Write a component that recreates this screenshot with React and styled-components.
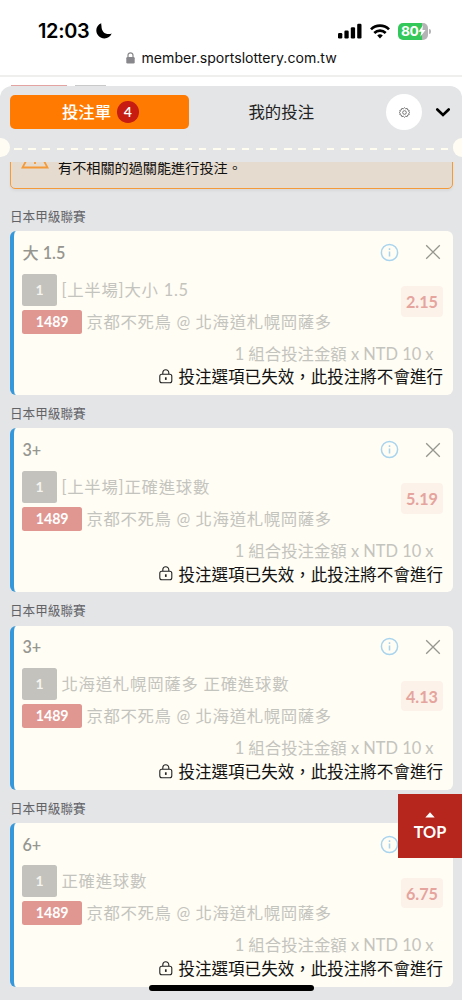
import React from "react";
import styled, { createGlobalStyle } from "styled-components";

const GlobalStyle = createGlobalStyle`
  * { box-sizing: border-box; }
  body {
    margin: 0;
    background: #fff;
    font-family: Lato, "Noto Sans CJK TC", sans-serif;
    color: #222;
  }
`;

const Screen = styled.div`
  position: relative;
  width: 462px;
  height: 1000px;
  overflow: hidden;
  display: flex;
  flex-direction: column;
  background: #fff;
`;

const BrowserTop = styled.header`
  height: 77px;
  flex: none;
  border-bottom: 2px solid #efefed;
  font-family: Inter, sans-serif;
  color: #000;
`;

const StatusRow = styled.div`
  display: flex;
  align-items: center;
  height: 30px;
  margin-top: 16px;
  padding: 0 31px 0 38px;
`;

const Clock = styled.span`
  font-size: 19.9px;
  font-weight: 600;
  letter-spacing: -0.3px;
  line-height: 30px;
  width: 58px;
`;

const StatusIcons = styled.div`
  margin-left: auto;
  display: flex;
  align-items: center;
`;

const Wifi = styled.svg`
  margin-left: 8px;
`;

const Battery = styled.div`
  width: 30px;
  height: 17px;
  margin-left: 8px;
  padding-left: 3px;
  border-radius: 5px;
  background: linear-gradient(90deg, #34c759 0 24px, #b4b4b6 24px);
  color: #fff;
  display: flex;
  align-items: center;
  font-size: 13.8px;
  font-weight: 700;
  letter-spacing: -0.5px;
  line-height: 17px;
`;

const BatteryTip = styled.span`
  width: 2px;
  height: 5px;
  margin-left: 1px;
  border-radius: 0 2px 2px 0;
  background: #b4b4b6;
`;

const Address = styled.div`
  display: flex;
  align-items: center;
  height: 24px;
  padding-left: 126px;
  font-size: 14.1px;
  line-height: 24px;
  color: #111;
  svg { margin-right: 6.5px; }
`;

const PageStrip = styled.div`
  height: 9px;
  flex: none;
  display: flex;
  align-items: flex-end;
  gap: 8px;
  padding-left: 11px;
`;

const Sliver = styled.span`
  width: ${(p) => p.$w}px;
  height: 1px;
  background: ${(p) => p.$color};
`;

const Panel = styled.main`
  flex: 1;
  min-height: 0;
  overflow: hidden;
  border-radius: 12px 12px 0 0;
  background: #e4e5e7;
`;

const TabBar = styled.nav`
  display: flex;
  align-items: center;
  height: 52px;
  padding: 0 10px 0 9.5px;
`;

const Tab = styled.div`
  display: flex;
  align-items: center;
  justify-content: center;
  gap: 6px;
  width: 179.5px;
  height: 34px;
  padding-left: ${(p) => (p.$active ? 2 : 0)}px;
  margin-left: ${(p) => (p.$active ? 0 : 2.5)}px;
  border-radius: 5px;
  font-size: 16.4px;
  line-height: 34px;
  font-weight: ${(p) => (p.$active ? 500 : 400)};
  color: ${(p) => (p.$active ? "#fff" : "#222")};
  background: ${(p) => (p.$active ? "#ff7a00" : "transparent")};
`;

const Count = styled.span`
  width: 21.5px;
  height: 21.5px;
  border-radius: 50%;
  background: #c61c12;
  color: #fff;
  text-align: center;
  line-height: 22.5px;
  font-size: 14px;
  font-weight: 600;
`;

const RoundButton = styled.div`
  display: flex;
  align-items: center;
  justify-content: center;
  width: 36px;
  height: 36px;
  margin-left: 15.4px;
  border-radius: 50%;
  background: #fff;
`;

const Chevron = styled.svg`
  margin: 2px 0 0 13px;
`;

const Perforation = styled.div`
  display: flex;
  align-items: center;
  justify-content: space-between;
  height: 19px;
`;

const Notch = styled.span`
  width: 9.5px;
  height: 19px;
  background: #fffdf3;
  border-radius: ${(p) => (p.$right ? "9.5px 0 0 9.5px" : "0 9.5px 9.5px 0")};
`;

const Dashes = styled.span`
  width: 434px;
  height: 2.4px;
  margin-top: 3px;
  background: repeating-linear-gradient(90deg, #fffdf0 0 7.5px, transparent 7.5px 14.22px);
`;

const ScrollArea = styled.section`
  margin-top: 5px;
  padding: 0 9.5px;
  height: 838px;
  overflow: hidden;
`;

const Notice = styled.div`
  display: flex;
  align-items: flex-end;
  height: 60px;
  margin-top: -33.5px;
  padding: 0 0 10px 10px;
  border: 1.5px solid #f59a38;
  border-radius: 5px;
  background: #e6dbcf;
  font-size: 14.15px;
  font-weight: 400;
  line-height: 20px;
  color: #111;
  box-shadow: 0 2px 3px rgba(0, 0, 0, 0.05);
  svg { margin-right: 9.5px; margin-bottom: 8.5px; }
`;

const League = styled.h2`
  margin: 0;
  padding-left: 0.5px;
  height: 33.2px;
  line-height: 38px;
  font-size: 12.6px;
  font-weight: 400;
  color: #626367;
`;

const BetList = styled.div`
  padding-top: 9.5px;
`;

const Card = styled.article`
  height: 164px;
  border-left: 4px solid #3498db;
  border-radius: 6px;
  background: #fffdf4;
  padding: 0 9.5px 0 8.9px;
`;

const CardHead = styled.div`
  display: flex;
  align-items: center;
  height: 42.5px;
`;

const Pick = styled.span`
  flex: 1;
  font-size: 16.2px;
  font-weight: 600;
  line-height: 24px;
  padding-top: 1px;
  color: #969690;
`;

const PickCjk = styled.span`
  font-weight: 500;
`;

const CardMain = styled.div`
  display: flex;
  justify-content: space-between;
  height: 68px;
`;

const Lines = styled.div`
  display: flex;
  flex-direction: column;
  gap: 4px;
`;

const Line = styled.div`
  display: flex;
  align-items: center;
  gap: 4.5px;
  height: ${(p) => p.$h}px;
  font-size: 16.4px;
  font-weight: 400;
  letter-spacing: ${(p) => p.$tracking}px;
  line-height: 24px;
  color: #c4c4be;
  white-space: nowrap;
`;

const Tag = styled.span`
  width: ${(p) => p.$w}px;
  height: 100%;
  display: flex;
  align-items: center;
  justify-content: center;
  border-radius: 2.5px;
  background: ${(p) => (p.$red ? "#e19791" : "#c3c2bc")};
  color: ${(p) => (p.$red ? "#fff" : "#f5f4ee")};
  font-size: ${(p) => (p.$red ? 14.2 : 14)}px;
  font-weight: 700;
  letter-spacing: 0;
`;

const Odds = styled.span`
  width: 42px;
  height: 30.5px;
  margin-top: 12.5px;
  border-radius: 4px;
  background: #fcf2ea;
  color: #e5a49d;
  text-align: center;
  font-size: 16.2px;
  font-weight: 700;
  line-height: 31px;
`;

const Amount = styled.div`
  height: 24px;
  padding-right: 9.5px;
  text-align: right;
  font-size: 16.4px;
  line-height: 24px;
  font-weight: 400;
  color: #c4c4be;
`;

const Invalid = styled.div`
  display: flex;
  align-items: center;
  justify-content: flex-end;
  gap: 6px;
  height: 23px;
  padding-top: 1.5px;
  font-size: 16.55px;
  line-height: 23px;
  color: #111;
  white-space: nowrap;
  svg { margin-bottom: 2.5px; }
`;

const TopButton = styled.button`
  position: absolute;
  right: 0;
  top: 794px;
  width: 64px;
  height: 64px;
  border: 0;
  padding: 3px 0 0;
  display: flex;
  flex-direction: column;
  align-items: center;
  justify-content: center;
  gap: 3px;
  background: #b6261c;
  color: #fff;
  font: 700 16.3px/22px Lato, sans-serif;
`;

const HomeIndicator = styled.div`
  position: absolute;
  left: 149px;
  top: 984.5px;
  width: 164.5px;
  height: 6px;
  border-radius: 3px;
  background: #000;
`;

const InfoIcon = () => (
  <svg width="19" height="19" viewBox="0 0 19 19" fill="none" stroke="#a9d4ee" strokeWidth="1.5">
    <circle cx="9.5" cy="9.5" r="8.1" />
    <path d="M9.5 8.6v5M9.5 5.3v1.6" />
  </svg>
);

const CloseIcon = () => (
  <svg width="16" height="16" viewBox="0 0 16 16" stroke="#96968f" strokeWidth="1.3">
    <path d="M1.2 1.2l13.6 13.6M14.8 1.2L1.2 14.8" />
  </svg>
);

const HeadIcons = styled.div`
  display: flex;
  align-items: center;
  gap: 25.6px;
  padding-right: 2px;
`;

const LockIcon = () => (
  <svg width="14" height="15" viewBox="0 0 14 15" fill="none" stroke="#222" strokeWidth="1.1">
    <rect x="0.800" y="5.2" width="12" height="8.6" rx="2" />
    <path d="M3.800 5V3.8a3 3 0 0 1 6 0V5" />
    <path d="M6.800 8.3v2.6" strokeWidth="1.7" />
  </svg>
);

const GearIcon = () => (
  <svg width="11" height="11" viewBox="0 0 24 24" fill="none" stroke="#555" strokeWidth="1.7" strokeLinejoin="round">
    <path d="M12 1.500l2.500 2.400 3.400-.8 1 3.300 3.400 1-.9 3.300 1.600 1.300-1.600 1.300.9 3.300-3.400 1-1 3.300-3.400-.8-2.500 2.400-2.500-2.400-3.400.8-1-3.300-3.400-1 .9-3.300L1 12l1.600-1.300-.9-3.300 3.400-1 1-3.300 3.400.8z" />
    <circle cx="12" cy="12" r="4" />
  </svg>
);

const bets = [
  { pickLabel: "大 ", pick: "1.5", market: "[上半場]大小 1.5", odds: "2.15" },
  { pick: "3+", market: "[上半場]正確進球數", odds: "5.19" },
  { pick: "3+", market: "北海道札幌岡薩多 正確進球數", odds: "4.13" },
  { pick: "6+", market: "正確進球數", odds: "6.75" },
];

const BetCard = ({ bet }) => (
  <>
    <League>日本甲級聯賽</League>
    <Card>
      <CardHead>
        <Pick>
          {bet.pickLabel && <PickCjk>{bet.pickLabel}</PickCjk>}
          {bet.pick}
        </Pick>
        <HeadIcons>
          <InfoIcon />
          <CloseIcon />
        </HeadIcons>
      </CardHead>
      <CardMain>
        <Lines>
          <Line $h={32} $tracking={0.76}>
            <Tag $w={34.5}>1</Tag>
            {bet.market}
          </Line>
          <Line $h={24} $tracking={0.64}>
            <Tag $w={59.5} $red>1489</Tag>
            京都不死鳥 @ 北海道札幌岡薩多
          </Line>
        </Lines>
        <Odds>{bet.odds}</Odds>
      </CardMain>
      <Amount>1 組合投注金額 x NTD 10 x</Amount>
      <Invalid>
        <LockIcon />
        投注選項已失效，此投注將不會進行
      </Invalid>
    </Card>
  </>
);

export default function App() {
  return (
    <Screen>
      <GlobalStyle />
      <BrowserTop>
        <StatusRow>
          <Clock>12:03</Clock>
          <svg width="16" height="16" viewBox="0 0 16 16">
            <path d="M5.300.3C2.400 1.300.3 4 .3 7.300c0 4.500 3.600 8.100 8.100 8.100 3.400 0 6.200-2 7.300-4.900-1 .4-2 .6-3 .6-4.400 0-7.200-3.400-7.200-7.700 0-1.100-.5-2.100-.2-3.100z" />
          </svg>
          <StatusIcons>
            <svg width="24" height="16" viewBox="0 0 24 16">
              <rect x="0" y="10" width="4.300" height="5.500" rx="1.200" />
              <rect x="6.400" y="7.500" width="4.300" height="8" rx="1.200" />
              <rect x="12.800" y="4.300" width="4.300" height="11.200" rx="1.200" />
              <rect x="19.200" y="0.800" width="4.300" height="14.700" rx="1.200" />
            </svg>
            <Wifi width="20" height="15" viewBox="0 0 20 15" fill="none" stroke="#000" strokeWidth="2.700">
              <path d="M1 5.400a12.800 12.800 0 0 1 18 0M4.300 9a8.200 8.200 0 0 1 11.400 0" />
              <path d="M10 14.500l-2.800-2.900a4 4 0 0 1 5.600 0z" fill="#000" stroke="none" />
            </Wifi>
            <Battery>
              80
              <svg width="8" height="12" viewBox="0 0 8 12" fill="#fff">
                <path d="M5 .3L.5 6.700h2.800l-.9 5L7.500 5H4.400z" />
              </svg>
            </Battery>
            <BatteryTip />
          </StatusIcons>
        </StatusRow>
        <Address>
          <svg width="9" height="12" viewBox="0 0 9 12" fill="#88888c">
            <rect x="0.300" y="5" width="8.400" height="6.500" rx="1.200" />
            <path d="M2 5.500V3.300a2.500 2.500 0 0 1 5 0v2.200" fill="none" stroke="#88888c" strokeWidth="1.200" />
          </svg>
          member.sportslottery.com.tw
        </Address>
      </BrowserTop>
      <PageStrip>
        <Sliver $w={56} $color="#e3a3a0" />
        <Sliver $w={31} $color="#c9c9c9" />
      </PageStrip>
      <Panel>
        <TabBar>
          <Tab $active>
            投注單 <Count>4</Count>
          </Tab>
          <Tab>我的投注</Tab>
          <RoundButton>
            <GearIcon />
          </RoundButton>
          <Chevron width="16" height="12" viewBox="0 0 16 12" fill="none" stroke="#000" strokeWidth="2.700">
            <path d="M2.300 2.500L8 7.900l5.700-5.400" strokeLinecap="round" />
          </Chevron>
        </TabBar>
        <Perforation>
          <Notch />
          <Dashes />
          <Notch $right />
        </Perforation>
        <ScrollArea>
          <Notice>
            <svg width="28" height="26" viewBox="0 0 28 26" fill="none" stroke="#f59a38" strokeWidth="1.800">
              <path d="M14 1.500L26.500 24.500h-25z" />
              <path d="M14 9v7M14 18.500v2.500" />
            </svg>
            有不相關的過關能進行投注。
          </Notice>
          <BetList>
            {bets.map((bet) => (
              <BetCard key={bet.odds} bet={bet} />
            ))}
          </BetList>
        </ScrollArea>
      </Panel>
      <TopButton>
        <svg width="10" height="6" viewBox="0 0 10 6" fill="#fff">
          <path d="M5 .2L9.700 5.500H.3z" />
        </svg>
        TOP
      </TopButton>
      <HomeIndicator />
    </Screen>
  );
}
